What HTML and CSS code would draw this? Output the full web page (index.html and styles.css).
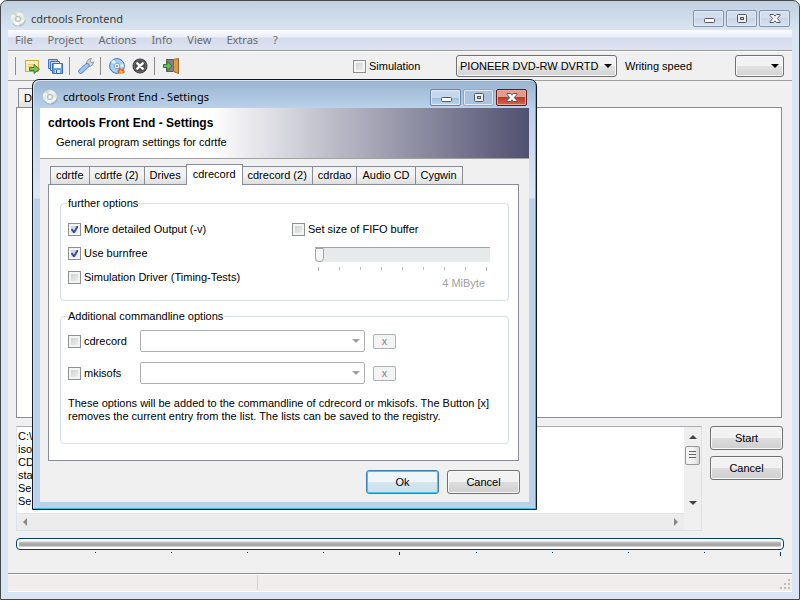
FILE: index.html
```html
<!DOCTYPE html>
<html lang="en">
<head>
  <meta charset="UTF-8">
  <meta name="viewport" content="width=device-width, initial-scale=1.0">
  <title>cdrtools Frontend</title>
  <link rel="stylesheet" href="styles.css">
</head>
<body>
  <!-- Shared symbols -->
  <svg class="defs" width="0" height="0" aria-hidden="true">
    <defs>
      <linearGradient id="disc" x1="0" y1="0" x2="1" y2="1">
        <stop offset="0" stop-color="#b9bcc0"/>
        <stop offset=".3" stop-color="#f4f4f4"/>
        <stop offset=".5" stop-color="#e2ebdf"/>
        <stop offset=".7" stop-color="#fafafa"/>
        <stop offset="1" stop-color="#b4b7ba"/>
      </linearGradient>
      <symbol id="cd" viewBox="0 0 16 16">
        <ellipse cx="8.6" cy="9" rx="7" ry="6.6" fill="#8f9aa3" opacity=".5"/>
        <ellipse cx="7.6" cy="7.6" rx="7" ry="6.6" fill="url(#disc)" transform="rotate(25 8 8)"/>
        <path d="M8 8 3 2.5 6 1z" fill="#c6dfbd"/>
        <path d="M8 8 14.4 6 14.5 9z" fill="#e2ebc8"/>
        <path d="M8 8 5 14 9 14.4z" fill="#fff"/>
        <circle cx="8" cy="8" r="2.8" fill="#d5dade" stroke="#aab2b8" stroke-width=".7"/>
        <circle cx="8" cy="8" r="1.3" fill="#fff"/>
      </symbol>
      <symbol id="min" viewBox="0 0 12 11">
        <rect x="1.5" y="5.5" width="10" height="4" rx="1" fill="#fff" stroke="#535666"/>
      </symbol>
      <symbol id="max" viewBox="0 0 12 11">
        <rect x="1.5" y="1.5" width="9" height="8" rx="1" fill="#eee" stroke="#535666"/>
        <rect x="4.5" y="4.5" width="3" height="2" fill="#b9c8da" stroke="#535666"/>
      </symbol>
      <symbol id="close" viewBox="0 0 12 11">
        <path d="M1 1.500h3.500L6 3.200l1.500-1.700H11v1L8.300 5.500 11 8.500v1H7.500L6 7.800 4.500 9.500H1v-1l2.700-3L1 2.500z" fill="#fff" stroke="#535666"/>
      </symbol>
    </defs>
  </svg>

  <div class="window">
    <header class="titlebar">
      <svg class="app-icon"><use href="#cd"/></svg>
      <span class="caption">cdrtools Frontend</span>
      <div class="sys-buttons">
        <button aria-label="Minimize"><svg><use href="#min"/></svg></button>
        <button aria-label="Maximize"><svg><use href="#max"/></svg></button>
        <button aria-label="Close"><svg><use href="#close"/></svg></button>
      </div>
    </header>

    <nav class="menu">
      <a href="#">File</a>
      <a href="#">Project</a>
      <a href="#">Actions</a>
      <a href="#">Info</a>
      <a href="#">View</a>
      <a href="#">Extras</a>
      <a href="#">?</a>
    </nav>

    <div class="toolbar">
      <span class="sep"></span>
      <button class="tool" aria-label="Open project">
        <svg viewBox="0 0 16 16">
          <path d="M1.5 2.5h13v11h-13z" fill="#fbe9a6" stroke="#d9a63c"/>
          <path d="M2 3h12v2H2z" fill="#fff7d6"/>
          <path d="M4 6.5h7M4 8.5h4" stroke="#e5c977"/>
          <path d="M5.500 9.500h4.500v-3l5.500 4.500-5.500 4.500v-3H5.500z" fill="#7cc05a" stroke="#3e7f2b"/>
        </svg>
      </button>
      <button class="tool" aria-label="Save project">
        <svg viewBox="0 0 16 16">
          <path d="M1.500 1.500h9v9h-9z" fill="#a9c8f0" stroke="#3f74c4"/>
          <path d="M3.500 3.500h9v9h-9z" fill="#c9defa" stroke="#3f74c4"/>
          <path d="M5.500 5.500h10v10h-10z" fill="#6fa0e4" stroke="#3a6fc0"/>
          <path d="M7 6h7v4H7z" fill="#fff"/>
          <path d="M8 12h5v3H8z" fill="#dfe9f7"/>
          <path d="M9 12h1v3H9z" fill="#2d62b3"/>
        </svg>
      </button>
      <span class="sep"></span>
      <button class="tool" aria-label="Settings">
        <svg viewBox="0 0 16 16">
          <path d="M9 7 8.500 4 11 1l2.500-.5-1.500 2.500 1 1.500 2.500-.5L15 6.500 12 8.500 9.500 8z" fill="#d5d9de" stroke="#7d858f" stroke-width=".8"/>
          <path d="M2.700 13.300 9 7.500" stroke="#5b86cb" stroke-width="5" stroke-linecap="round"/>
          <path d="M2.700 13.300 9 7.500" stroke="#a3c3f2" stroke-width="3.400" stroke-linecap="round"/>
        </svg>
      </button>
      <span class="sep"></span>
      <button class="tool" aria-label="Write disc">
        <svg viewBox="0 0 16 16">
          <circle cx="8" cy="8" r="7.400" fill="#a9d0f2" stroke="#3c76b8"/>
          <path d="M8 8 2 3.500 5 1.500zM8 8l6.500-2 .5 3z" fill="#e9f5ff"/>
          <circle cx="8" cy="8" r="2.800" fill="#fff" stroke="#5b8fc8" stroke-width=".8"/>
          <circle cx="8" cy="8" r="1" fill="#4a7fba"/>
          <path d="M8.500 13.500c0-2 1.500-1.500 1.500-4 2 .5 2 2 2.500 2 .3-.6.500-1 .5-1.500 1.500 1.500 3 2.500 2.500 4.500-1 1.500-6 1.500-7-1z" fill="#f4661c"/>
          <path d="M10 14.500c.5-1 1-1.500 1-2.300 1.500.6 3 .8 3 2.300z" fill="#ffd44a"/>
        </svg>
      </button>
      <button class="tool" aria-label="Abort">
        <svg viewBox="0 0 16 16">
          <circle cx="8" cy="8" r="7" fill="#4b4b4b" stroke="#333"/>
          <circle cx="8" cy="8" r="6" fill="none" stroke="#777" stroke-width=".8"/>
          <path d="M5.300 5.300l5.400 5.400M10.700 5.300l-5.400 5.400" stroke="#fff" stroke-width="2.400" stroke-linecap="round"/>
        </svg>
      </button>
      <span class="sep"></span>
      <button class="tool" aria-label="Exit">
        <svg viewBox="0 0 16 16">
          <path d="M3.500 1.500h7v12h-7z" fill="#808080" stroke="#5c5c5c"/>
          <path d="M10.500 1.500l5-1v15l-5-2z" fill="#d99a4e" stroke="#9c6424"/>
          <path d="M.5 6.500h3.500v-3l5 4.500-5 4.500v-3H.5z" fill="#6dbb62" stroke="#2f7a2c"/>
        </svg>
      </button>
      <label class="check simulation"><input type="checkbox"> Simulation</label>
      <select class="combo device" aria-label="Device">
        <option>PIONEER DVD-RW DVRTD</option>
      </select>
      <label class="speed-label" for="speed">Writing speed</label>
      <select class="combo speed" id="speed"><option></option></select>
    </div>

    <main class="client">
      <div class="main-tabs"><button>D</button></div>
      <div class="files"></div>

      <div class="bottom">
        <div class="log">
          <textarea readonly aria-label="Output">C:\
iso
CD
sta
Se
Se</textarea>
          <div class="vscroll">
            <i class="arrow up"></i>
            <span class="thumb"></span>
            <i class="arrow down"></i>
          </div>
          <div class="hscroll">
            <i class="arrow left"></i>
            <i class="arrow right"></i>
          </div>
        </div>
        <div class="actions">
          <button class="btn">Start</button>
          <button class="btn">Cancel</button>
        </div>
      </div>

      <progress class="bar" value="0" max="100" aria-label="Capacity"></progress>
      <div class="scale">
        <i></i><i></i><i></i><i></i><i class="major"></i><i></i><i></i><i></i><i></i><i class="last"></i>
      </div>
    </main>

    <footer class="status">
      <span class="pane"></span>
      <svg class="grip" viewBox="0 0 11 11">
        <path d="M8 0h2v2H8zM4 4h2v2H4zM8 4h2v2H8zM0 8h2v2H0zM4 8h2v2H4zM8 8h2v2H8z" fill="#bdbdbd"/>
      </svg>
    </footer>
  </div>

  <dialog class="settings" open aria-label="cdrtools Front End - Settings">
    <header class="titlebar">
      <svg class="app-icon"><use href="#cd"/></svg>
      <span class="caption">cdrtools Front End - Settings</span>
      <div class="sys-buttons">
        <button aria-label="Minimize"><svg><use href="#min"/></svg></button>
        <button class="off" aria-label="Maximize" disabled><svg><use href="#max"/></svg></button>
        <button class="red" aria-label="Close"><svg><use href="#close"/></svg></button>
      </div>
    </header>

    <div class="dialog-body">
      <div class="banner">
        <h1>cdrtools Front End - Settings</h1>
        <p>General program settings for cdrtfe</p>
      </div>

      <div class="tabs" role="tablist">
        <button role="tab">cdrtfe</button>
        <button role="tab">cdrtfe (2)</button>
        <button role="tab">Drives</button>
        <button role="tab" class="active" aria-selected="true">cdrecord</button>
        <button role="tab">cdrecord (2)</button>
        <button role="tab">cdrdao</button>
        <button role="tab">Audio CD</button>
        <button role="tab">Cygwin</button>
      </div>

      <div class="page">
        <fieldset class="further">
          <legend>further options</legend>
          <div class="column">
            <label class="check"><input type="checkbox" checked> More detailed Output (-v)</label>
            <label class="check"><input type="checkbox" checked> Use burnfree</label>
            <label class="check"><input type="checkbox"> Simulation Driver (Timing-Tests)</label>
          </div>
          <div class="column fifo">
            <label class="check"><input type="checkbox"> Set size of FIFO buffer</label>
            <input type="range" min="4" max="128" value="4" disabled aria-label="FIFO size">
            <div class="ticks"><i></i><i></i><i></i><i></i><i></i><i></i><i></i><i></i><i></i></div>
            <output>4 MiByte</output>
          </div>
        </fieldset>

        <fieldset class="extra">
          <legend>Additional commandline options</legend>
          <div class="option">
            <label class="check"><input type="checkbox"> cdrecord</label>
            <select class="list" aria-label="cdrecord options" disabled><option></option></select>
            <button class="remove" disabled>x</button>
          </div>
          <div class="option">
            <label class="check"><input type="checkbox"> mkisofs</label>
            <select class="list" aria-label="mkisofs options" disabled><option></option></select>
            <button class="remove" disabled>x</button>
          </div>
          <p>These options will be added to the commandline of cdrecord or mkisofs. The Button [x]<br>removes the current entry from the list. The lists can be saved to the registry.</p>
        </fieldset>
      </div>

      <div class="dialog-buttons">
        <button class="btn default">Ok</button>
        <button class="btn">Cancel</button>
      </div>
    </div>
  </dialog>
</body>
</html>
```
FILE: styles.css
```css
* {
  box-sizing: border-box;
}

body {
  margin: 0;
  height: 100vh;
  overflow: hidden;
  background: #fff;
  color: #000;
  font: 11px/13px "Liberation Sans", Arial, sans-serif;
}

button,
select,
textarea,
input {
  margin: 0;
  font: inherit;
  color: inherit;
}

.defs {
  position: absolute;
}

/* Window frame */
.window {
  display: flex;
  flex-direction: column;
  height: 100vh;
  padding: 0 7px 7px;
  border: 1px solid #45484d;
  border-radius: 7px 7px 0 0;
  background: linear-gradient(#c1d0e0, #d9e5f2 30px);
}

.titlebar {
  display: flex;
  align-items: center;
  height: 29px;
  font: 11px/16px "Noto Sans", "Open Sans", sans-serif;
}

.window > .titlebar {
  flex: none;
  padding: 6px 2px 0;
  color: #3c3c3c;
}

.app-icon {
  width: 16px;
  height: 16px;
}

.caption {
  flex: 1;
  padding-left: 5px;
}

.sys-buttons {
  display: flex;
  gap: 2px;
}

.sys-buttons button {
  display: flex;
  align-items: center;
  justify-content: center;
  width: 31px;
  height: 17px;
  padding: 0;
  border: 1px solid #8593ab;
  border-radius: 2px;
  background: linear-gradient(#d3dfec 50%, #c7d5e5 50%, #d6e3f0);
  box-shadow: inset 0 0 0 1px #dfe9f4;
}

.sys-buttons svg {
  width: 12px;
  height: 11px;
}

/* Menu and toolbar */
.menu {
  display: flex;
  flex: none;
  gap: 15px;
  height: 21px;
  padding: 2px 7px 0;
  border-bottom: 1px solid #9c9c9c;
  background: linear-gradient(#fdfdff, #e9edf7 7px, #d5dbec 8px, #dfe4f3);
  font: 11px/16px "Noto Sans", "Open Sans", sans-serif;
}

.menu a {
  color: #6d6d6d;
  text-decoration: none;
}

.toolbar {
  display: flex;
  flex: none;
  align-items: center;
  height: 30px;
  padding: 0 8px 0 7px;
  border-top: 1px solid #fff;
  border-bottom: 1px solid #a0a0a0;
  background: #f0f0f0;
}

.sep {
  width: 1px;
  height: 18px;
  margin-right: 8px;
  background: #8c8c8c;
}

.tool {
  width: 16px;
  height: 16px;
  margin-right: 7px;
  padding: 0;
  border: 0;
  background: none;
}

.tool + .sep {
  margin-left: -1px;
}

.tool svg {
  display: block;
  width: 16px;
  height: 16px;
  fill: none;
}

.simulation {
  width: 64px;
  margin-left: auto;
}

.combo {
  appearance: none;
  height: 22px;
  padding: 0 14px 0 3px;
  border: 1px solid #707070;
  border-radius: 3px;
  background:
    url("data:image/svg+xml,%3Csvg xmlns='http://www.w3.org/2000/svg' width='8' height='4'%3E%3Cpath d='M0 0h8L4 4z'/%3E%3C/svg%3E") right 4px center no-repeat,
    linear-gradient(#f2f2f2 50%, #e2e2e2 50%, #d2d2d2);
  box-shadow: inset 0 0 0 1px #f8f8f8;
}

.device {
  width: 161px;
  margin: 0 8px 0 39px;
}

.speed-label {
  width: 102px;
}

.speed {
  width: 49px;
  margin-left: 8px;
}

/* Check boxes */
.check {
  display: flex;
  align-items: center;
  gap: 3px;
  height: 24px;
  white-space: nowrap;
}

.check input {
  appearance: none;
  flex: none;
  width: 13px;
  height: 13px;
  border: 1px solid #8e8f8f;
  background: linear-gradient(135deg, #c6cad0, #f6f6f6) padding-box;
  box-shadow: inset 0 0 0 2px #f4f4f4;
}

.check input:checked {
  background: url("data:image/svg+xml,%3Csvg xmlns='http://www.w3.org/2000/svg' width='11' height='11'%3E%3Cpath d='M2.500 5l2.500 3.500 4-7' fill='none' stroke='%233b4f9b' stroke-width='2'/%3E%3C/svg%3E"), linear-gradient(135deg, #c6cad0, #f6f6f6);
}

/* Main area */
.client {
  display: flex;
  flex: 1;
  flex-direction: column;
  min-height: 0;
  padding: 7px 8px 0;
  background: #f0f0f0;
}

.main-tabs {
  display: flex;
  padding-left: 2px;
}

.main-tabs button {
  width: 48px;
  height: 19px;
  padding: 0 5px;
  border: 1px solid #898c95;
  border-bottom: 0;
  background: linear-gradient(#f3f3f3 50%, #e0e0e0);
  text-align: left;
}

.files {
  flex: 1;
  margin-right: 2px;
  border: 1px solid #898c95;
  background: #fff;
}

.bottom {
  display: flex;
  gap: 8px;
  padding-top: 8px;
}

.log {
  display: grid;
  flex: 1;
  grid-template-columns: 1fr 17px;
  grid-template-rows: 86px 17px;
  border: 1px solid #dde1e8;
  border-top-color: #abadb3;
}

.log textarea {
  display: block;
  overflow: hidden;
  padding: 3px 1px;
  border: 0;
  outline: 0;
  background: #fff;
  resize: none;
}

.vscroll {
  display: flex;
  flex-direction: column;
  align-items: center;
  padding: 8px 0;
  background: #efefef;
}

.thumb {
  width: 15px;
  height: 19px;
  margin-top: 7px;
  border: 1px solid #979797;
  border-radius: 2px;
  background:
    repeating-linear-gradient(#666 0 1px, transparent 1px 3px) center / 7px 9px no-repeat,
    linear-gradient(90deg, #f4f4f4 50%, #d8d8d8);
}

.hscroll {
  display: flex;
  justify-content: space-between;
  align-items: center;
  padding: 0 6px;
  border-top: 1px solid #e3e3e3;
  background: #ececec;
}

.arrow {
  border: 4px solid transparent;
}

.up {
  border-top: 0;
  border-bottom-color: #444;
}

.down {
  margin-top: auto;
  border-bottom: 0;
  border-top-color: #444;
}

.left {
  border-left: 0;
  border-right-color: #888;
}

.right {
  border-right: 0;
  border-left-color: #888;
}

.actions {
  display: flex;
  flex-direction: column;
  gap: 6px;
  width: 74px;
}

.btn {
  width: 73px;
  height: 24px;
  padding: 0;
  border: 1px solid #707070;
  border-radius: 3px;
  background: linear-gradient(#f2f2f2 50%, #dddddd 50%, #cfcfcf);
  box-shadow: inset 0 0 0 1px #fafafa;
}

.default {
  border-color: #3c7fb1;
  background: linear-gradient(#eef6fa 50%, #d6e6ee 50%, #cce0ea);
  box-shadow: inset 0 0 0 1px #3fc8f0;
}

.bar {
  appearance: none;
  width: 100%;
  height: 12px;
  margin-top: 7px;
  padding: 2px;
  border: 1px solid #003c74;
  border-radius: 4px;
  background: #fff;
}

.bar::-webkit-progress-bar {
  background: linear-gradient(#f0f0f0, #b4b4b4 30%, #a0a0a0 70%, #e0e0e0);
}

.bar::-webkit-progress-value {
  background: none;
}

.scale {
  display: flex;
  height: 23px;
  padding: 2px 3px 0 4px;
}

.scale i {
  flex: 1;
  height: 1px;
  border-right: 1px solid #003c74;
}

.scale .major {
  height: 3px;
}

.scale .last {
  height: 4px;
}

.status {
  display: flex;
  flex: none;
  justify-content: space-between;
  align-items: flex-end;
  height: 19px;
  padding: 0 1px 1px;
  border-top: 1px solid #8c8c8c;
  border-bottom: 1px solid #fff;
  background: #f1edec;
  box-shadow: inset 0 1px #fff;
}

.pane {
  width: 249px;
  height: 15px;
  border-right: 1px solid #d5d2d1;
}

.grip {
  width: 11px;
  height: 11px;
}

/* Settings dialog, floats over the main window */
.settings {
  position: absolute;
  top: 79px;
  left: 32px;
  width: 505px;
  margin: 0;
  padding: 0 7px 7px;
  border: 1px solid #10161d;
  border-radius: 7px 7px 0 0;
  background:
    linear-gradient(#99b4d1, #b9d1ea 28px, #dce8f5 118px, #b9d1ea 119px);
  box-shadow: inset -1px -1px #23c5e0, inset 1px 1px #d5e5f5;
  color: #000;
}

.settings .titlebar {
  height: 28px;
  padding: 6px 2px 0;
}

.settings .sys-buttons button {
  border-color: #6883a8;
  background: linear-gradient(#c4d7ec 50%, #9fbbdb 50%, #bcd6ee);
}

.settings .sys-buttons .off {
  border-color: #8ea9c8;
  background: #aac3de;
}

.settings .sys-buttons .red {
  border-color: #5f1c22;
  background: linear-gradient(#e59a8c 45%, #bd3a26 50%, #d2664b);
  box-shadow: inset 0 0 0 1px #eba99c;
}

.dialog-body {
  padding-bottom: 8px;
  background: #f0f0f0;
}

.banner {
  height: 51px;
  padding: 9px 8px;
  border-bottom: 1px solid #a0a0a0;
  background: linear-gradient(90deg, #fff 35%, #505070);
}

.banner h1 {
  margin: 0;
  font-size: 12px;
  line-height: 13px;
}

.banner p {
  margin: 6px 8px 0;
}

.tabs {
  display: flex;
  align-items: flex-end;
  height: 26px;
  padding-left: 10px;
}

.tabs button {
  height: 19px;
  padding: 0 5px;
  border: 1px solid #898c95;
  border-right-width: 0;
  background: linear-gradient(#f3f3f3 50%, #dedede);
  white-space: nowrap;
}

.tabs button:last-child {
  border-right-width: 1px;
}

.tabs .active {
  z-index: 1;
  height: 21px;
  padding: 0 6px 2px;
  border-right-width: 1px;
  border-bottom: 0;
  background: #fff;
}

.tabs .active + button {
  border-left-width: 0;
}

.page {
  margin: -1px 10px 0 8px;
  padding: 11px 9px 16px 11px;
  border: 1px solid #898c95;
  background: #fff;
}

fieldset {
  margin: 0;
  padding: 7px 7px 10px;
  border: 1px solid #d5dfe5;
  border-radius: 4px;
}

legend {
  height: 14px;
  padding: 0;
  line-height: 14px;
}

.further {
  display: grid;
  grid-template-columns: 224px 1fr;
}

.fifo {
  display: flex;
  flex-direction: column;
}

.fifo input[type="range"] {
  appearance: none;
  width: 175px;
  height: 15px;
  margin: 6px 0 0 23px;
  border-top: 1px solid #a5a5a5;
  background: #e7eaea;
}

.fifo input[type="range"]::-webkit-slider-thumb {
  appearance: none;
  width: 9px;
  height: 14px;
  border: 1px solid #a5a5a5;
  border-radius: 1px 1px 4px 4px;
  background: #f6f6f6;
}

.ticks {
  display: flex;
  justify-content: space-between;
  width: 169px;
  margin: 5px 0 0 26px;
}

.ticks i {
  width: 1px;
  height: 3px;
  background: #b5b8b8;
}

.ticks i:first-child,
.ticks i:last-child {
  height: 4px;
}

.fifo output {
  width: 193px;
  margin-top: 6px;
  color: #a0a0a0;
  text-align: right;
}

.extra {
  margin-top: 8px;
  padding: 2px 7px 20px;
}

.option {
  display: flex;
  align-items: center;
  height: 32px;
}

.option .check {
  width: 72px;
}

.list {
  appearance: none;
  width: 225px;
  height: 22px;
  border: 1px solid #afafaf;
  border-radius: 2px;
  background: #fff url("data:image/svg+xml,%3Csvg xmlns='http://www.w3.org/2000/svg' width='8' height='4'%3E%3Cpath d='M0 0h8L4 4z' fill='%23a0a0a0'/%3E%3C/svg%3E") right 4px center no-repeat;
  opacity: 1;
}

.remove {
  width: 23px;
  height: 15px;
  margin: 0 8px;
  padding: 0;
  border: 1px solid #adb2b5;
  border-radius: 2px;
  background: #f4f4f4;
  color: #838383;
  line-height: 11px;
}

.extra p {
  margin: 8px 0 0;
}

.dialog-buttons {
  display: flex;
  justify-content: flex-end;
  gap: 8px;
  padding: 9px 9px 0;
}
```
